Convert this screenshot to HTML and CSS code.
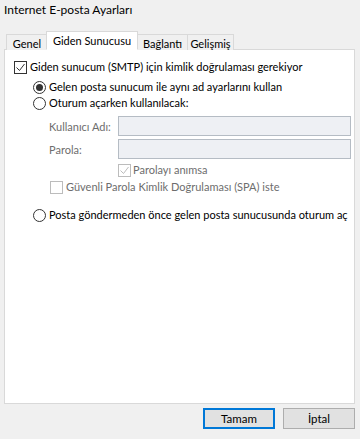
FILE: index.html
```html
<!DOCTYPE html>
<html>
    <head>
        <title>Internet E-posta Ayarları</title>
        <link rel="stylesheet" href="styles.css">
    </head>
    <body>
        <div class="title">Internet E-posta Ayarları</div>

        <div class="tabs">
            <div class="tab tab-general">Genel</div>
            <div class="tab tab-active">Giden Sunucusu</div>
            <div class="tab tab-connection">Bağlantı</div>
            <div class="tab tab-advanced">Gelişmiş</div>
        </div>

        <div class="panel">
            <div class="row row-auth">
                <span class="check">
                    <svg width="11" height="11" viewBox="0 0 11 11"><path d="M1.5 5.5 L4.5 8.5 L9.5 2" fill="none" stroke="#333" stroke-width="1"/></svg>
                </span>
                <span>Giden sunucum (SMTP) için kimlik doğrulaması gerekiyor</span>
            </div>

            <div class="row row-radio row-first">
                <span class="radio"><span class="dot"></span></span>
                <span>Gelen posta sunucum ile aynı ad ayarlarını kullan</span>
            </div>
            <div class="row row-radio row-second">
                <span class="radio"></span>
                <span>Oturum açarken kullanılacak:</span>
            </div>

            <div class="field field-user">
                <span class="field-label">Kullanıcı Adı:</span>
                <span class="input"></span>
            </div>
            <div class="field field-pass">
                <span class="field-label">Parola:</span>
                <span class="input"></span>
            </div>

            <div class="row row-remember disabled">
                <span class="check check-off">
                    <svg width="11" height="11" viewBox="0 0 11 11"><path d="M1.5 5.5 L4.5 8.5 L9.5 2" fill="none" stroke="#bcbcbc" stroke-width="1"/></svg>
                </span>
                <span>Parolayı anımsa</span>
            </div>
            <div class="row row-spa disabled">
                <span class="check check-off"></span>
                <span>Güvenli Parola Kimlik Doğrulaması (SPA) iste</span>
            </div>

            <div class="row row-radio row-last">
                <span class="radio"></span>
                <span>Posta göndermeden önce gelen posta sunucusunda oturum aç</span>
            </div>
        </div>

        <div class="footer">
            <button class="btn btn-default">Tamam</button>
            <button class="btn">İptal</button>
        </div>
    </body>
</html>
```

FILE: styles.css
```css
body{
    margin: 0;
    background-color: #f0f0f0;
    color: #000;
    font-family: Lato, sans-serif;
    font-size: 11px;
    width: 360px;
    height: 439px;
    overflow: hidden;
}

.title{
    height: 18px;
    line-height: 18px;
    padding: 1px 0 0 4px;
    font-size: 12px;
}

.tabs{
    display: flex;
    align-items: flex-end;
    margin: 11px 0 0 6px;
    height: 20px;
    position: relative;
    z-index: 1;
}

.tab{
    box-sizing: border-box;
    height: 16px;
    line-height: 17px;
    text-align: center;
    border: 1px solid #d9d9d9;
    border-bottom: none;
    margin-right: -1px;
    background-color: #f0f0f0;
    white-space: nowrap;
}

.tab-general{
    width: 42px;
}

.tab-connection{
    width: 51px;
}

.tab-advanced{
    width: 47px;
}

.tab-active{
    width: 92px;
    height: 19px;
    line-height: 18px;
    background-color: #fff;
    margin: 0 -1px;
    position: relative;
    z-index: 2;
    border-bottom: 1px solid #fff;
}

.panel{
    margin: -1px 5px 0 4px;
    height: 353px;
    border: 1px solid #d9d9d9;
    background-color: #fff;
}

.row{
    display: flex;
    align-items: center;
    height: 16px;
    line-height: 16px;
    white-space: nowrap;
}

.row-auth{
    margin: 9px 0 0 9px;
    gap: 3px;
}

.row-radio{
    margin-left: 28px;
    gap: 3px;
}

.row-first{
    margin-top: 4px;
}

.row-last{
    margin-top: 12px;
}

.check{
    display: flex;
    align-items: center;
    justify-content: center;
    box-sizing: border-box;
    width: 13px;
    height: 13px;
    border: 1px solid #333;
    background-color: #fff;
}

.check-off{
    border-color: #bcbcbc;
}

.radio{
    display: flex;
    align-items: center;
    justify-content: center;
    box-sizing: border-box;
    width: 13px;
    height: 13px;
    border: 1px solid #333;
    border-radius: 50%;
    background-color: #fff;
}

.dot{
    width: 7px;
    height: 7px;
    border-radius: 50%;
    background-color: #333;
}

.disabled{
    color: #6d6d6d;
}

.field{
    display: flex;
    align-items: center;
    margin-left: 44px;
    height: 20px;
}

.field-user{
    margin-top: 5px;
}

.field-pass{
    margin-top: 3px;
}

.field-label{
    width: 69px;
    color: #6d6d6d;
    white-space: nowrap;
}

.input{
    box-sizing: border-box;
    flex: 1;
    height: 20px;
    margin-right: 3px;
    border: 1px solid #b5bcc4;
    background-color: #eef0f4;
}

.row-remember{
    margin: 3px 0 0 113px;
    gap: 2px;
}

.row-spa{
    margin: 1px 0 0 45px;
    gap: 3px;
}

.footer{
    display: flex;
    justify-content: flex-end;
    gap: 8px;
    padding: 4px 5px 0 0;
}

.btn{
    box-sizing: border-box;
    width: 72px;
    height: 21px;
    padding: 0;
    font-family: Lato, sans-serif;
    font-size: 11.5px;
    color: #000;
    background-color: #e1e1e1;
    border: 1px solid #adadad;
}

.btn-default{
    border: 2px solid #0078d7;
}
```
